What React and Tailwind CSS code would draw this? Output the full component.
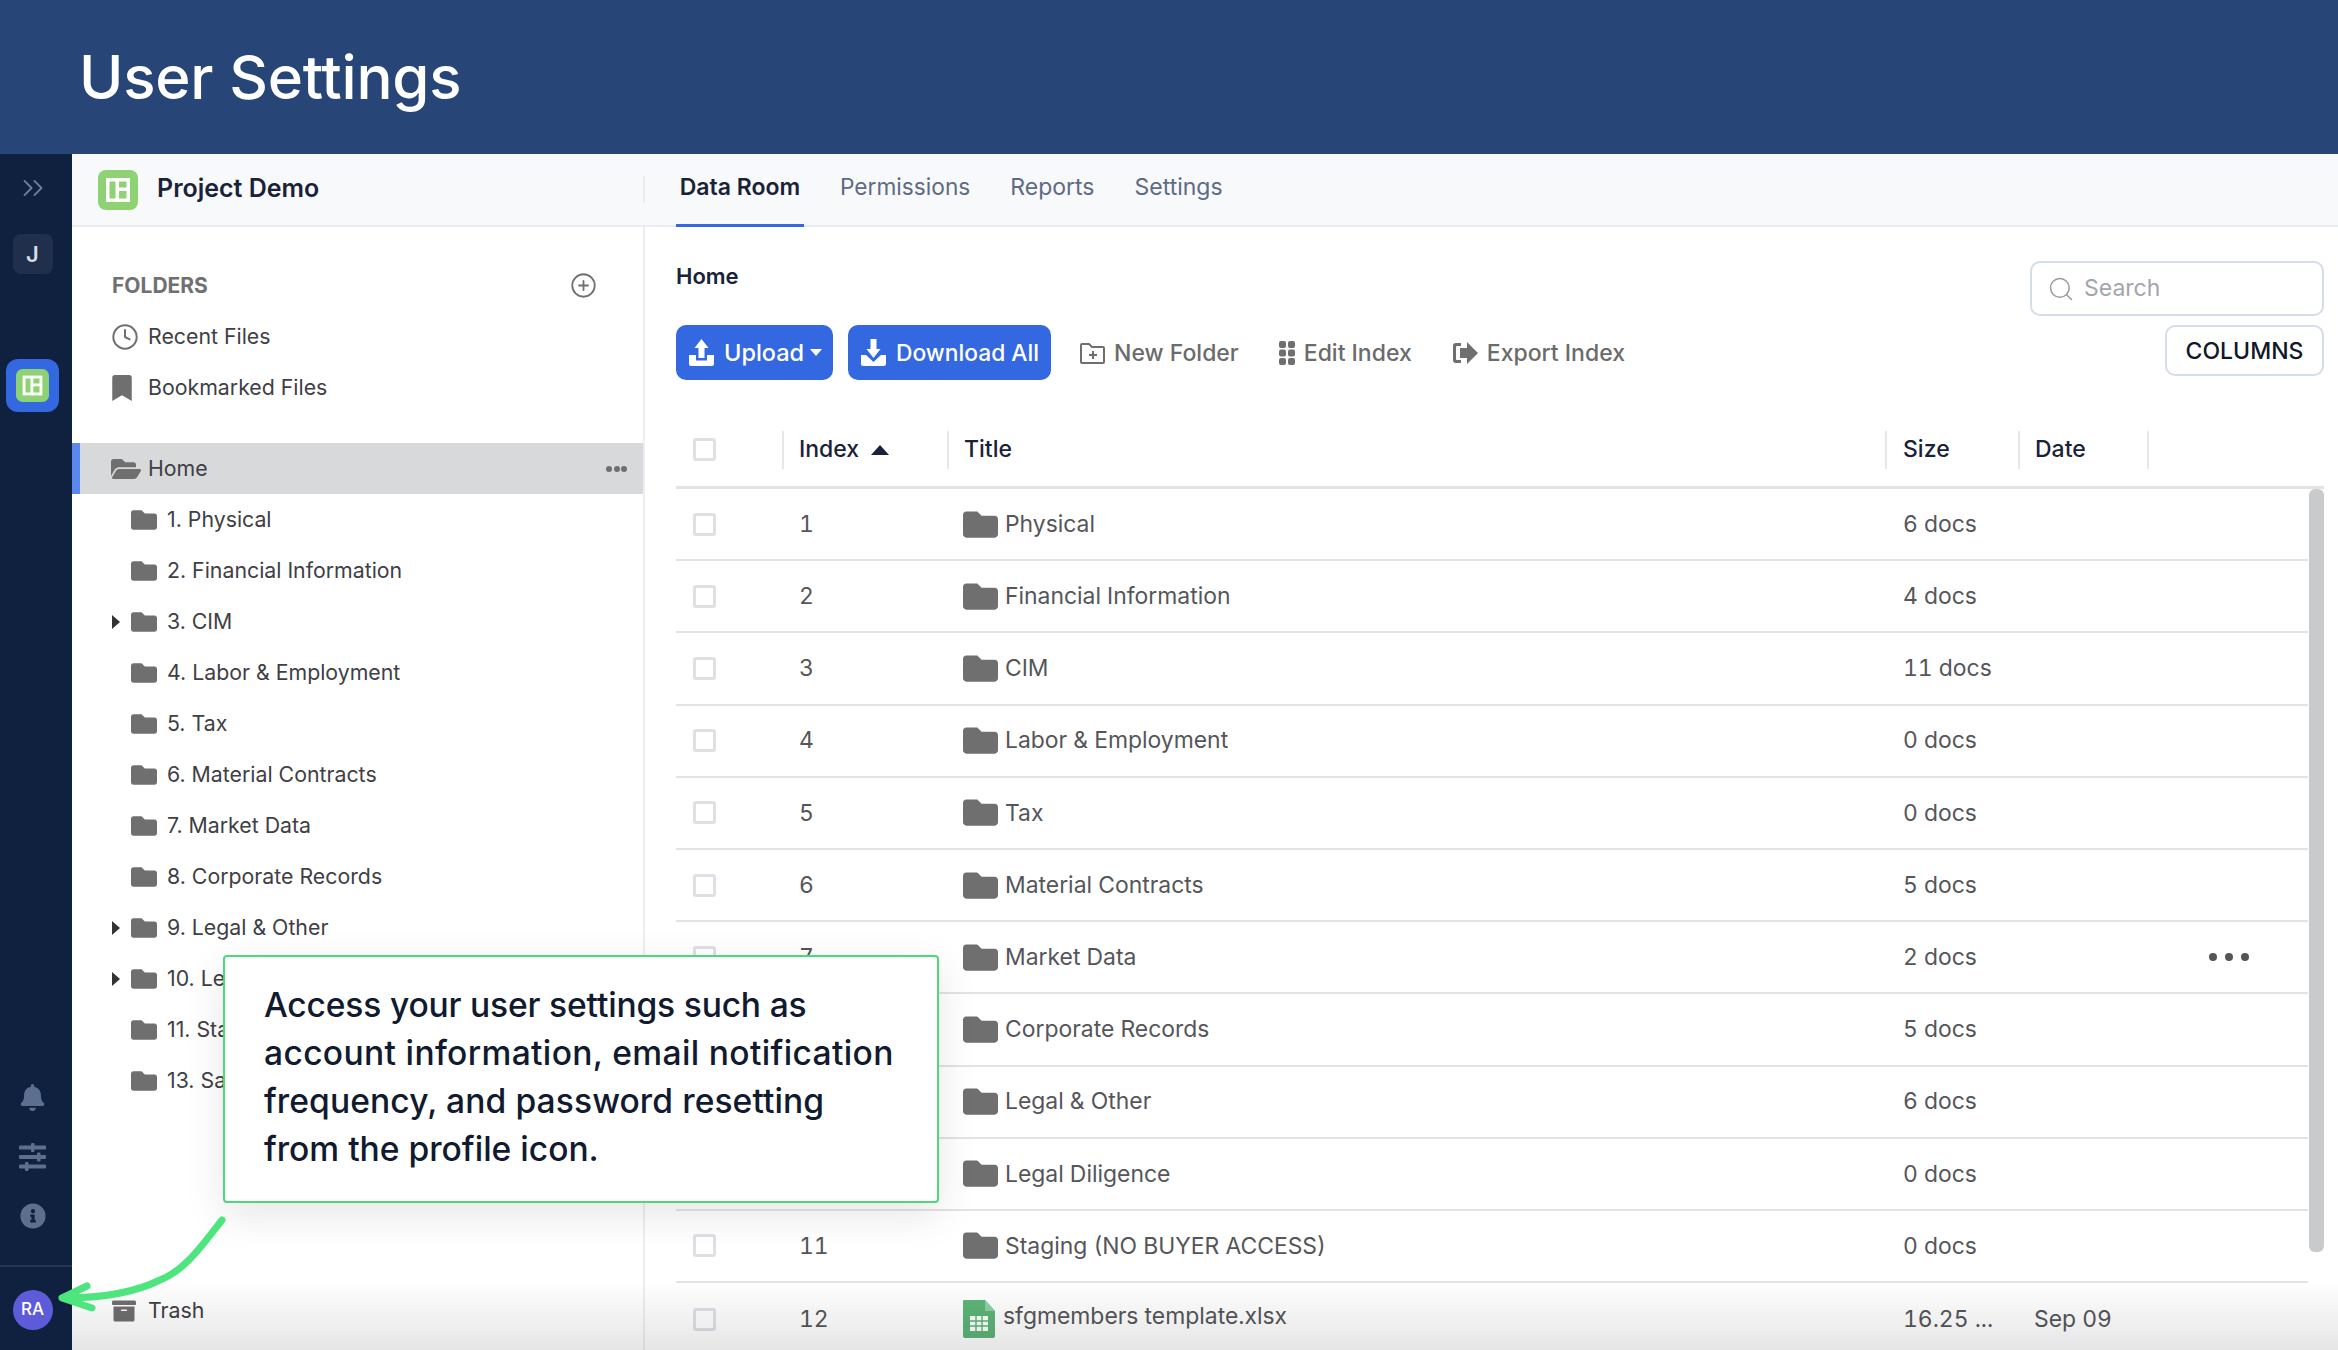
import React from 'react';
import { FaFolder, FaFolderOpen, FaBookmark, FaBell, FaInfoCircle, FaArchive } from 'react-icons/fa';
import { ChevronsRight, Search, CirclePlus, Clock } from 'lucide-react';

const Logo = ({ className }) => (
  <svg viewBox="0 0 40 40" className={className}>
    <rect width="40" height="40" rx="8" fill="#8ed273" />
    <path d="M8 8h24v24H8z" fill="#fff" />
    <path d="M11.5 11.5h6v17h-6zM21 11.5h7.5v6H21zM21 21h7.5v7.5H21z" fill="#8ed273" />
  </svg>
);

const UploadIcon = () => (
  <svg viewBox="0 0 25 27" className="w-[25px] h-[27px]" fill="#fff">
    <path d="M12.5 0l7 9h-4v10h-6V9h-4z" />
    <path d="M0 16h7v5.5h11V16h7v9a2 2 0 0 1-2 2H2a2 2 0 0 1-2-2z" />
  </svg>
);
const DownloadIcon = () => (
  <svg viewBox="0 0 25 27" className="w-[25px] h-[27px]" fill="#fff">
    <path d="M9.5 0h6v10h4l-7 9-7-9h4z" />
    <path d="M0 16h5l7.5 7 7.5-7h5v9a2 2 0 0 1-2 2H2a2 2 0 0 1-2-2z" />
  </svg>
);
const NewFolderIcon = () => (
  <svg viewBox="0 0 27 24" className="w-[27px] h-[24px]" fill="none" stroke="#6f6f6f" strokeWidth="2">
    <path d="M2 4a1 1 0 0 1 1-1h7l3 3h11a1 1 0 0 1 1 1v14a1 1 0 0 1-1 1H3a1 1 0 0 1-1-1z" />
    <path d="M14 10v8M10 14h8" />
  </svg>
);
const GridIcon = () => (
  <svg viewBox="0 0 16 24" className="w-[16px] h-[24px]" fill="#6f6f6f">
    <rect x="0" y="0" width="7" height="7" rx="2" />
    <rect x="9" y="0" width="7" height="7" rx="2" />
    <rect x="0" y="8.5" width="7" height="7" rx="2" />
    <rect x="9" y="8.5" width="7" height="7" rx="2" />
    <rect x="0" y="17" width="7" height="7" rx="2" />
    <rect x="9" y="17" width="7" height="7" rx="2" />
  </svg>
);
const ExportIcon = () => (
  <svg viewBox="0 0 26 24" className="w-[26px] h-[24px]" fill="#6f6f6f">
    <path d="M9 2H4a3 3 0 0 0-3 3v14a3 3 0 0 0 3 3h5v-3H5a1 1 0 0 1-1-1V6a1 1 0 0 1 1-1h4z" />
    <path d="M15 1l11 11-11 11v-6H8V7h7z" />
  </svg>
);
const SlidersIcon = () => (
  <svg viewBox="0 0 27 28" className="w-[27px] h-[28px]" fill="#5d6f8e">
    <rect x="0" y="2.5" width="27" height="4" rx="1" />
    <rect x="0" y="12" width="27" height="4" rx="1" />
    <rect x="0" y="21.5" width="27" height="4" rx="1" />
    <rect x="12" y="0" width="3.5" height="9" rx="1" />
    <rect x="18" y="9.5" width="3.5" height="9" rx="1" />
    <rect x="6" y="19" width="3.5" height="9" rx="1" />
  </svg>
);
const XlsxIcon = () => (
  <svg viewBox="0 0 32 38" className="w-[32px] h-[38px]">
    <path d="M1 0h21l10 11v25a2 2 0 0 1-2 2H2a2 2 0 0 1-2-2V1a1 1 0 0 1 1-1z" fill="#5cb578" />
    <path d="M22 0l10 11H22z" fill="#8fd0a4" />
    <path d="M7 16h18v15H7z" fill="#fff" />
    <path d="M13 16v15M19 16v15M7 21h18M7 26h18" stroke="#5cb578" strokeWidth="1.4" />
  </svg>
);
const Check = () => <div className="w-[23px] h-[23px] rounded-[3px] border-[3px] border-[#dfe0e6] bg-white" />;

const tree = [
  [false, '1. Physical'],
  [false, '2. Financial Information'],
  [true, '3. CIM'],
  [false, '4. Labor & Employment'],
  [false, '5. Tax'],
  [false, '6. Material Contracts'],
  [false, '7. Market Data'],
  [false, '8. Corporate Records'],
  [true, '9. Legal & Other'],
  [true, '10. Le'],
  [false, '11. Sta'],
  [false, '13. Sa'],
];

const rows = [
  ['1', 'Physical', '6 docs'],
  ['2', 'Financial Information', '4 docs'],
  ['3', 'CIM', '11 docs'],
  ['4', 'Labor & Employment', '0 docs'],
  ['5', 'Tax', '0 docs'],
  ['6', 'Material Contracts', '5 docs'],
  ['7', 'Market Data', '2 docs'],
  ['', 'Corporate Records', '5 docs'],
  ['', 'Legal & Other', '6 docs'],
  ['', 'Legal Diligence', '0 docs'],
  ['11', 'Staging (NO BUYER ACCESS)', '0 docs'],
];

const grid = 'grid grid-cols-[106px_165px_938px_133px_131px_1fr] items-center';

export default function App() {
  return (
    <div className="relative h-[1350px] w-[2338px] overflow-hidden bg-white font-['Inter','Liberation_Sans',sans-serif]">
      <header className="flex h-[154px] items-center bg-[#274577] pl-[79px]">
        <h1 className="text-[60px] font-medium text-white tracking-[-0.2px]">User Settings</h1>
      </header>

      <div className="flex h-[1196px]">
        <nav className="flex w-[72px] shrink-0 flex-col bg-[#10213f]">
          <div className="flex w-[65px] flex-col items-center">
            <ChevronsRight className="mt-[17px] text-[#6d7f9c]" size={34} strokeWidth={1.3} />
            <div className="mt-[29px] flex h-[40px] w-[40px] items-center justify-center rounded-[8px] bg-[#202f4b] text-[22px] font-semibold text-[#d7dce5]">J</div>
            <div className="mt-[85px] flex h-[53px] w-[53px] items-center justify-center rounded-[12px] bg-[#3468e0]">
              <Logo className="h-[33px] w-[33px]" />
            </div>
          </div>
          <div className="mt-auto flex flex-col">
            <div className="flex w-[65px] flex-col items-center">
              <div className="flex h-[59px] items-center"><FaBell size={27} className="text-[#5d6f8e]" /></div>
              <div className="flex h-[59px] items-center"><SlidersIcon /></div>
              <div className="flex h-[59px] items-center"><FaInfoCircle size={26} className="text-[#5d6f8e]" /></div>
            </div>
            <div className="mt-[20px] h-[2px] w-full bg-[#25344f]" />
            <div className="flex w-[65px] justify-center">
              <div className="mb-[20px] mt-[23px] flex h-[40px] w-[40px] items-center justify-center rounded-full bg-[#5d5bd8] text-[17px] font-medium text-white">RA</div>
            </div>
          </div>
        </nav>

        <div className="flex min-w-0 flex-1 flex-col">
          <div className="flex h-[73px] shrink-0 items-center border-b-2 border-[#e9ecf1] bg-[#f8f9fb]">
            <div className="flex w-[571px] items-center pl-[26px]">
              <Logo className="h-[40px] w-[40px]" />
              <span className="ml-[19px] pb-[2px] text-[25px] font-semibold text-[#1a2238]">Project Demo</span>
            </div>
            <div className="h-[27px] w-[2px] bg-[#e9ecf1]" />
            <div className="flex h-full items-center pl-[31px]">
              <div className="relative flex h-full w-[128px] items-center justify-center pb-[4px] text-[23px] font-semibold text-[#1a2238]">
                Data Room
                <div className="absolute bottom-[-2px] left-0 h-[3px] w-full bg-[#3468e0]" />
              </div>
              <span className="ml-[36px] pb-[4px] text-[22.7px] text-[#5d6b84]">Permissions</span>
              <span className="ml-[40px] pb-[4px] text-[23px] text-[#5d6b84]">Reports</span>
              <span className="ml-[40px] pb-[4px] text-[23px] text-[#5d6b84]">Settings</span>
            </div>
          </div>

          <div className="flex min-h-0 flex-1">
            <aside className="flex w-[573px] shrink-0 flex-col border-r-2 border-[#eceef1] pt-[33px]">
              <div className="flex h-[51px] items-center justify-between pl-[40px] pr-[46px]">
                <span className="text-[21px] font-bold text-[#6f7072]">FOLDERS</span>
                <CirclePlus size={27} strokeWidth={1.6} className="text-[#6f7072]" />
              </div>
              <div className="flex h-[51px] items-center pl-[40px]">
                <Clock size={28} strokeWidth={1.7} className="-ml-[1px] text-[#6f6f6f]" />
                <span className="ml-[9px] text-[21.3px] text-[#3f4045]">Recent Files</span>
              </div>
              <div className="flex h-[51px] items-center pl-[40px]">
                <FaBookmark size={26} className="w-[20px] text-[#6f6f6f]" />
                <span className="ml-[16px] text-[21.3px] text-[#3f4045]">Bookmarked Files</span>
              </div>
              <div className="mt-[30px] flex h-[51px] items-center border-l-8 border-[#5b87ef] bg-[#d8d9db] pl-[31px] pr-[16px]">
                <FaFolderOpen size={30} className="text-[#6f6f6f]" />
                <span className="ml-[7px] text-[21.3px] text-[#3f4045]">Home</span>
                <div className="ml-auto flex gap-[1.5px]">
                  <div className="h-[6px] w-[6px] rounded-full bg-[#6f6f6f]" />
                  <div className="h-[6px] w-[6px] rounded-full bg-[#6f6f6f]" />
                  <div className="h-[6px] w-[6px] rounded-full bg-[#6f6f6f]" />
                </div>
              </div>
              {tree.map(([caret, label]) => (
                <div key={label} className="flex h-[51px] shrink-0 items-center pl-[40px]">
                  <div className="w-[19px]">
                    {caret && <div className="h-0 w-0 border-y-[7px] border-l-[8px] border-y-transparent border-l-[#333]" />}
                  </div>
                  <FaFolder size={26} className="text-[#6f6f6f]" />
                  <span className="ml-[10px] whitespace-nowrap text-[21.3px] text-[#3f4045]">{label}</span>
                </div>
              ))}
              <div className="mb-[14px] mt-auto flex h-[51px] items-center pl-[40px]">
                <FaArchive size={24} className="text-[#6f6f6f]" />
                <span className="ml-[12px] text-[21.3px] text-[#3f4045]">Trash</span>
              </div>
            </aside>

            <main className="flex min-w-0 flex-1 flex-col overflow-hidden pl-[31px] pr-[14px] pt-[34px]">
              <div className="flex shrink-0 items-start justify-between">
                <div>
                  <div className="flex h-[30px] items-center text-[22px] font-semibold text-[#1a2238]">Home</div>
                  <div className="mt-[34px] flex items-center">
                    <button className="flex h-[55px] w-[157px] items-center rounded-[10px] bg-[#3468e0] pl-[13px] text-[23.5px] font-medium text-white">
                      <UploadIcon />
                      <span className="ml-[10px]">Upload</span>
                      <span className="ml-[6px] h-0 w-0 border-x-[6px] border-t-[7px] border-x-transparent border-t-white" />
                    </button>
                    <button className="ml-[15px] flex h-[55px] w-[203px] items-center rounded-[10px] bg-[#3468e0] pl-[13px] text-[22.8px] font-medium text-white">
                      <DownloadIcon />
                      <span className="ml-[10px] pt-[1px]">Download All</span>
                    </button>
                    <div className="ml-[28px] flex items-center text-[23px] font-medium text-[#6b6b6b]">
                      <NewFolderIcon /><span className="ml-[8px] pt-[1px]">New Folder</span>
                    </div>
                    <div className="ml-[40px] flex items-center text-[23px] font-medium text-[#6b6b6b]">
                      <GridIcon /><span className="ml-[9px] pt-[1px]">Edit Index</span>
                    </div>
                    <div className="ml-[40px] flex items-center text-[23px] font-medium text-[#6b6b6b]">
                      <ExportIcon /><span className="ml-[9px] pt-[1px]">Export Index</span>
                    </div>
                  </div>
                </div>
                <div className="flex flex-col items-end">
                  <div className="flex h-[55px] w-[294px] items-center rounded-[10px] border-2 border-[#d5dcea] bg-white pl-[15px]">
                    <Search size={28} strokeWidth={1.3} className="text-[#9a9ca3]" />
                    <span className="ml-[9px] text-[23px] text-[#a3a5ad]">Search</span>
                  </div>
                  <div className="mt-[9px] flex h-[51px] w-[159px] items-center justify-center rounded-[10px] border-2 border-[#d5dcea] bg-white pt-[1px] text-[23px] font-medium text-[#111827]">COLUMNS</div>
                </div>
              </div>

              <div className={`${grid} mt-[31px] h-[78px] shrink-0 border-b-[3px] border-[#e3e3e5] pt-[2px] text-[23px] font-medium text-[#1a2238]`}>
                <div className="pl-[17px]"><Check /></div>
                <div className="flex h-[38px] items-center border-l-2 border-[#e6e7ea] pl-[15px]">
                  Index
                  <span className="ml-[12px] h-0 w-0 border-x-[9px] border-b-[10px] border-x-transparent border-b-[#1a2238]" />
                </div>
                <div className="flex h-[38px] items-center border-l-2 border-[#e6e7ea] pl-[15px]">Title</div>
                <div className="flex h-[38px] items-center border-l-2 border-[#e6e7ea] pl-[16px]">Size</div>
                <div className="flex h-[38px] items-center border-x-2 border-[#e6e7ea] pl-[15px]">Date</div>
                <div />
              </div>

              <div className="flex min-h-0 flex-1">
                <div className="min-w-0 flex-1">
                  {rows.map(([i, t, s]) => (
                    <div key={t} className={`${grid} h-[72.2px] border-b-2 border-[#e3e3e5] text-[22.9px] tabular-nums text-[#55565a]`}>
                      <div className="pl-[17px]"><Check /></div>
                      <div className="pl-[17px]">{i}</div>
                      <div className="flex items-center pl-[16px]">
                        <FaFolder size={35} className="text-[#6f6f6f]" />
                        <span className="ml-[7px]">{t}</span>
                      </div>
                      <div className="pl-[18px]">{s}</div>
                      <div />
                      <div className="flex justify-end pr-[59px]">
                        {i === '7' && (
                          <div className="flex gap-[8px]">
                            <div className="h-[8px] w-[8px] rounded-full bg-[#555]" />
                            <div className="h-[8px] w-[8px] rounded-full bg-[#555]" />
                            <div className="h-[8px] w-[8px] rounded-full bg-[#555]" />
                          </div>
                        )}
                      </div>
                    </div>
                  ))}
                  <div className={`${grid} h-[72.2px] text-[22.9px] tabular-nums text-[#55565a]`}>
                    <div className="pl-[17px]"><Check /></div>
                    <div className="pl-[17px]">12</div>
                    <div className="flex items-center pl-[16px]">
                      <XlsxIcon />
                      <span className="ml-[8px] pb-[5px]">sfgmembers template.xlsx</span>
                    </div>
                    <div className="pl-[18px]">16.25 ...</div>
                    <div className="pl-[16px]">Sep 09</div>
                    <div />
                  </div>
                </div>
                <div className="ml-[1px] h-[763px] w-[15px] rounded-[6px] bg-[#c8cacc]" />
              </div>
            </main>
          </div>
        </div>
      </div>

      <div className="pointer-events-none absolute bottom-0 left-[72px] right-0 h-[70px] bg-gradient-to-t from-black/10 to-transparent" />

      <div className="absolute left-[223px] top-[955px] h-[248px] w-[716px] rounded-[4px] border-2 border-[#4cd97b] bg-white pl-[39px] pt-[24px] text-[33.6px] font-medium leading-[48px] text-[#111a2e] shadow-[0_12px_40px_rgba(0,0,0,0.1)]">
        <div className="tracking-[-0.18px]">Access your user settings such as</div>
        <div className="tracking-[0.34px]">account information, email notification</div>
        <div className="tracking-[0.09px]">frequency, and password resetting</div>
        <div>from the profile icon.</div>
      </div>

      <svg className="pointer-events-none absolute left-[50px] top-[1210px] h-[110px] w-[180px]" viewBox="0 0 180 110" fill="none" stroke="#4ee57e" strokeWidth="7" strokeLinecap="round" strokeLinejoin="round">
        <path d="M172 10C150 38 135 60 110 70C80 85 45 88 14 88" />
        <path d="M37 76L12 88L42 98" />
      </svg>
    </div>
  );
}
